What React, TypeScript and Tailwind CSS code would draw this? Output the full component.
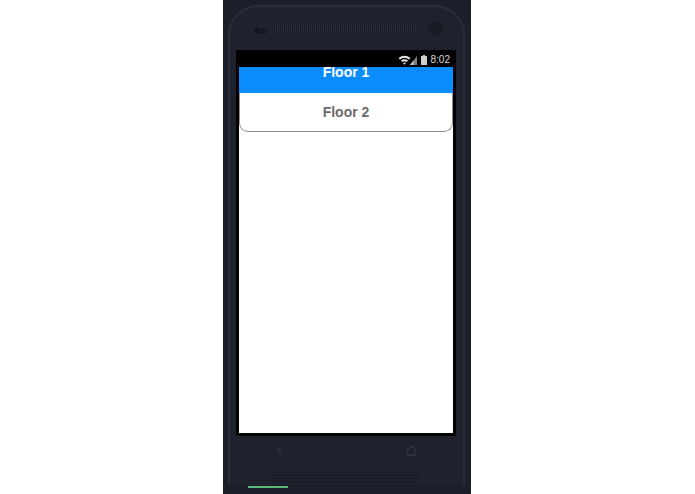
import { ChevronLeft } from 'lucide-react';

const App = () => {
  return (
    <div className="w-[695px] h-[494px] bg-white overflow-hidden pl-[223px] font-['Liberation_Sans',sans-serif]">
      <div className="w-[248px] h-[494px] bg-[#1b1f29] pt-[5px] px-[5px] flex flex-col">
        {/* bezel outline */}
        <div className="w-[237px] h-[480px] bg-[#1e222d] border-2 border-b-0 border-[#292e3a] rounded-t-[30px] flex flex-col">
          <div className="h-[43px] flex items-center pl-[24px] pt-[5px] shrink-0">
            <div className="flex gap-[1px]">
              <div className="w-[6px] h-[6px] rounded-full bg-[#11141b]" />
              <div className="w-[6px] h-[6px] rounded-full bg-[#151821]" />
            </div>
            <div className="w-[142px] h-[9px] ml-[7px] -mt-[5px] bg-[repeating-linear-gradient(90deg,#1a1d26_0px,#1a1d26_1px,#272b36_1px,#272b36_2px)]" />
            <div className="w-[17px] h-[17px] ml-[11px] -mt-[5px] rounded-full bg-[#181b24] border border-[#22262f]" />
          </div>
          <div className="w-[220px] h-[386px] ml-[6px] bg-black shrink-0 flex flex-col">
            <div className="h-[17px] flex items-center justify-end pr-[6px] gap-[3px] shrink-0">
              <svg width="13" height="10" viewBox="0 0 13 10" className="mt-[2px] mr-[-1px]">
                <path d="M0.5 3 Q6.5 -1.5 12.5 3 L11 4.5 Q6.5 1 2 4.5Z M3 5.5 Q6.5 3 10 5.5 L8.7 7 Q6.5 5.5 4.3 7Z M5 8 Q6.5 7 8 8 L6.5 9.8Z" fill="#e5e5e5" />
              </svg>
              <svg width="7" height="10" viewBox="0 0 7 10" className="-ml-[3px] mt-[2px]">
                <path d="M0 10 L7 1 V10Z" fill="#7d7d7d" />
                <path d="M0 10 L3.5 5.5 V10Z" fill="#c8c8c8" />
              </svg>
              <svg width="6" height="10" viewBox="0 0 6 10" className="ml-[1px] mt-[2px]">
                <path d="M2 0 H4 V1 H6 V10 H0 V1 H2Z" fill="#cfcfcf" />
              </svg>
              <span className="text-[10px] leading-none text-[#d8d8d8] ml-[1px] mt-[2px]">8:02</span>
            </div>
            <div className="w-[214px] h-[366px] mx-[3px] bg-white shrink-0">
              <div className="h-[26px] bg-[#0a8cff] flex justify-center overflow-hidden">
                <span className="text-[14px] leading-[11px] font-bold text-white">Floor 1</span>
              </div>
              <div className="h-[39px] bg-white border-b border-x border-[#8e8e8e] rounded-b-[9px] flex items-center justify-center">
                <span className="text-[14px] font-bold text-[#6b6b6b]">Floor 2</span>
              </div>
            </div>
          </div>
          <div className="h-[22px] flex pt-[8px] pl-[43px] shrink-0">
            <ChevronLeft size={13} strokeWidth={2.5} className="text-[#2f3440]" />
            <svg width="11" height="11" viewBox="0 0 11 11" className="ml-[120px] mt-[1px]">
              <path d="M1.5 10 V5 L5.5 1 L9.5 5 V10Z M1 10.5 H10" fill="none" stroke="#2f3440" strokeWidth="1.5" />
            </svg>
          </div>
          {/* lower speaker */}
          <div className="w-[145px] h-[11px] ml-[42px] mt-[13px] shrink-0 bg-[repeating-linear-gradient(0deg,#191c25_0px,#191c25_1px,#1e222d_1px,#1e222d_3px)]" />
        </div>
        <div className="h-[2px] w-[40px] ml-[20px] mt-[1px] bg-[#5cb87a] shrink-0" />
      </div>
    </div>
  );
};

export default App;
